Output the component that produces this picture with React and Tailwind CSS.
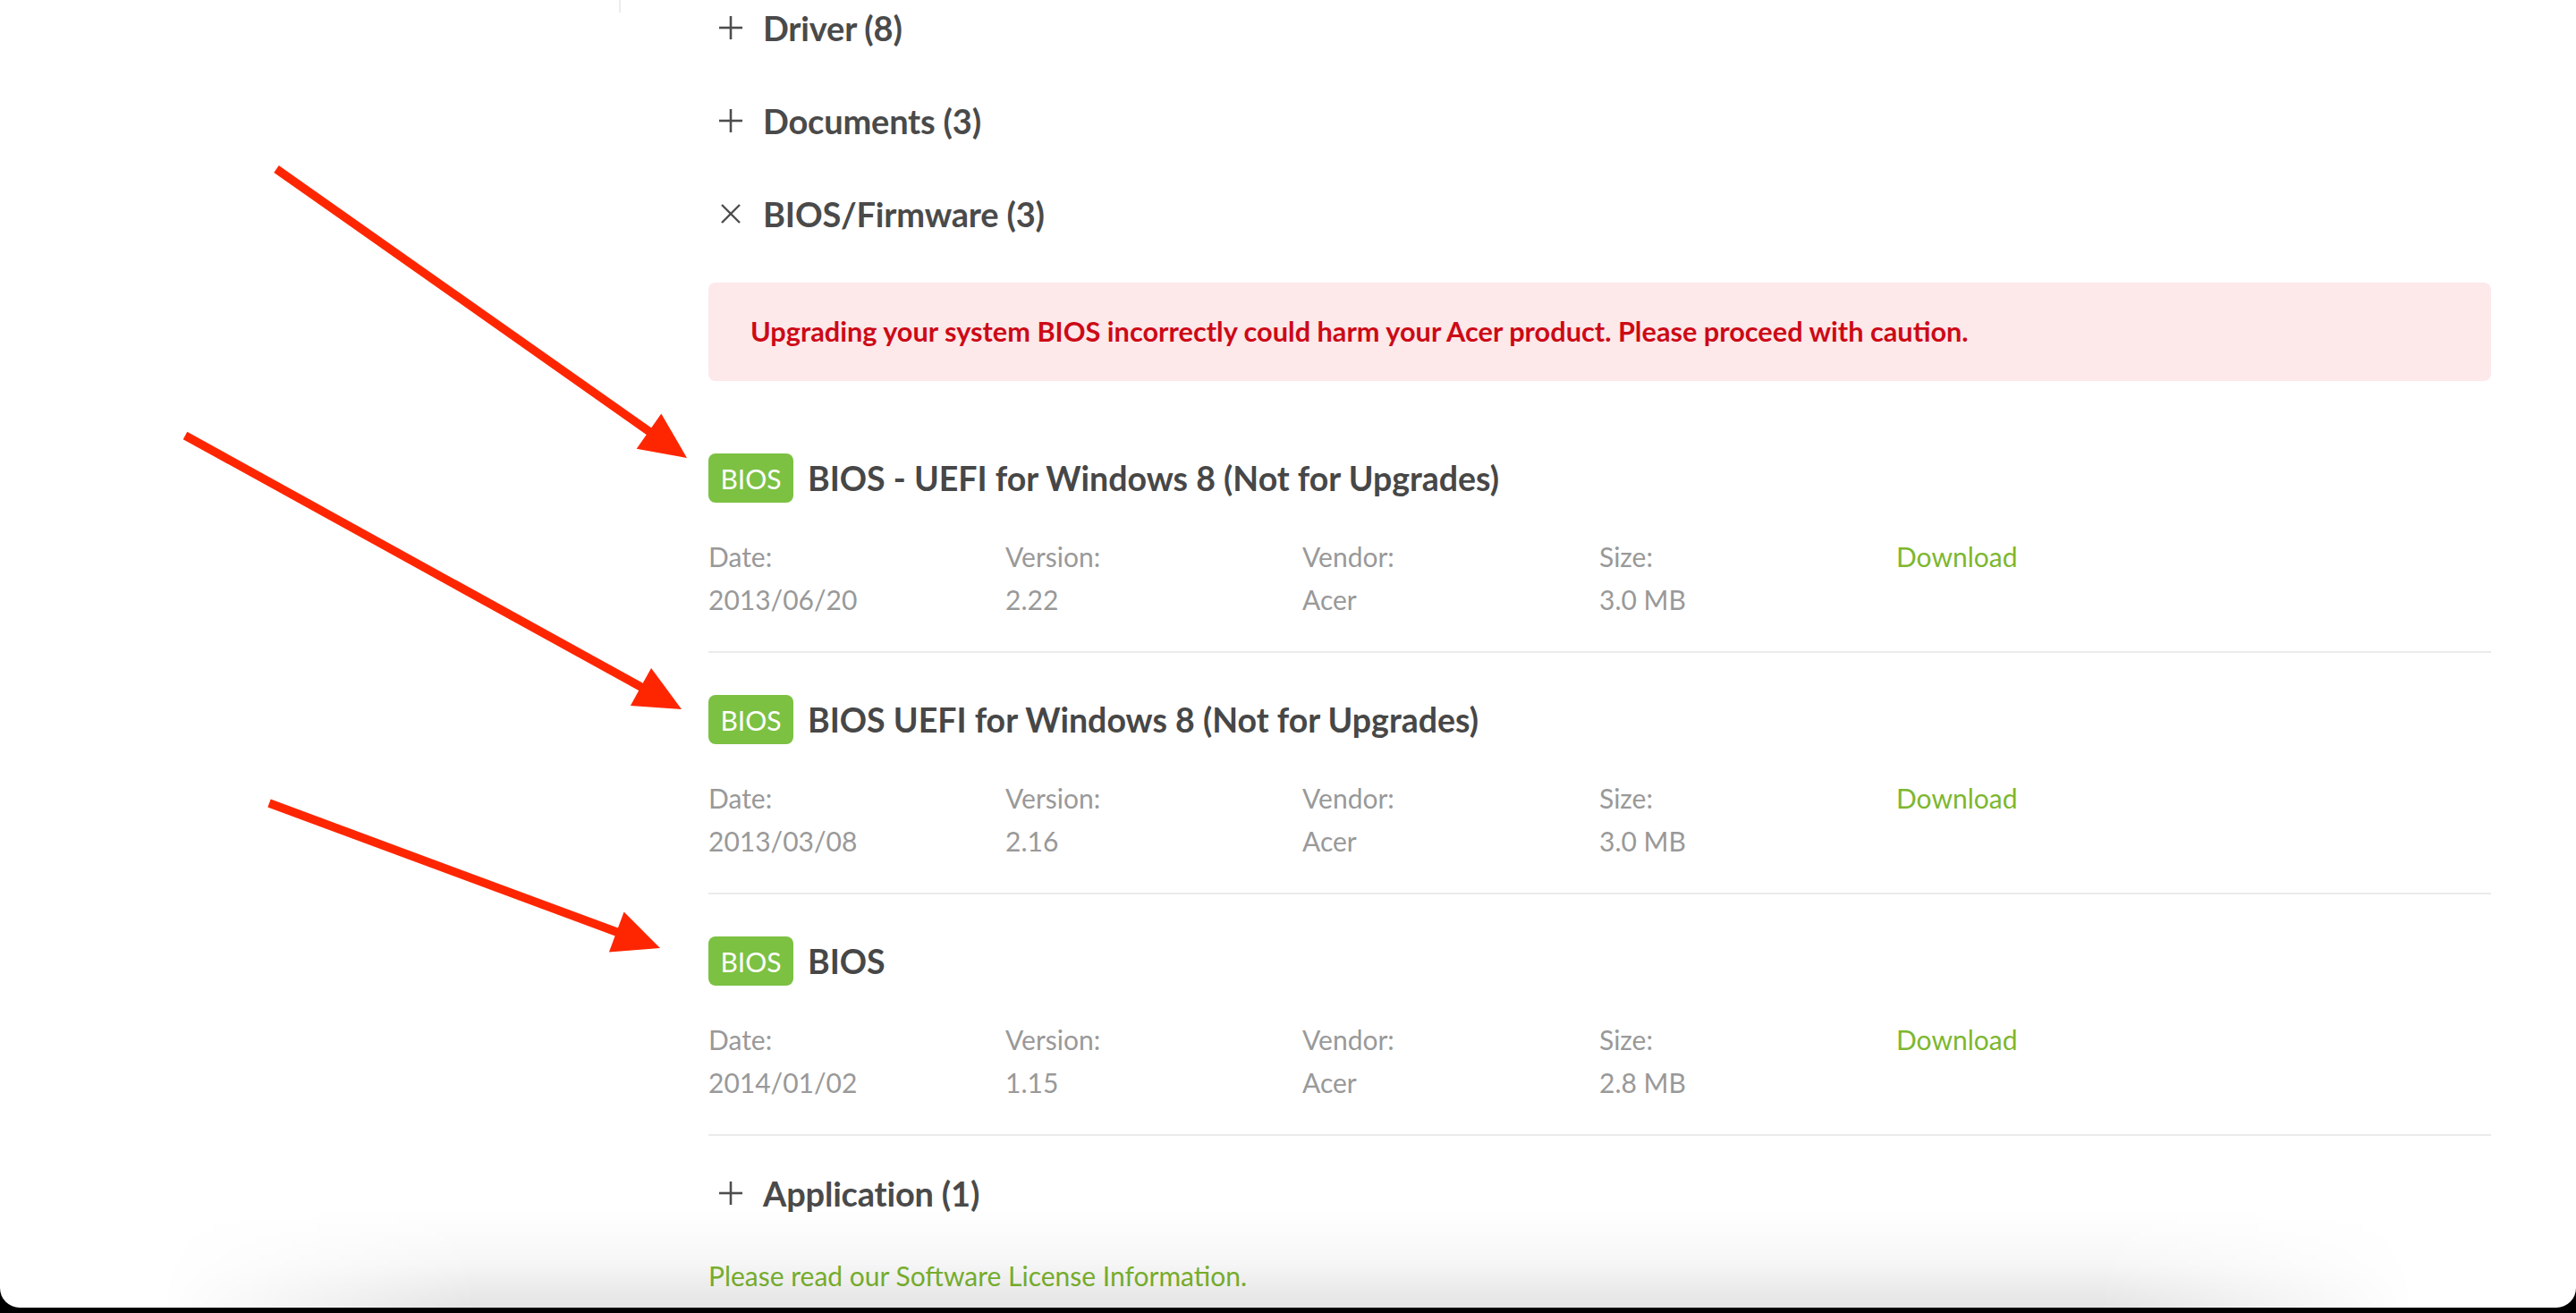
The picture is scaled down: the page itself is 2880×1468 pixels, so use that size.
import React from "react";

function PlusIcon() {
  return (
    <svg width="28" height="28" viewBox="0 0 28 28" className="block">
      <line x1="14" y1="1" x2="14" y2="27" stroke="#4d4d4d" strokeWidth="2.6" />
      <line x1="1" y1="14" x2="27" y2="14" stroke="#4d4d4d" strokeWidth="2.6" />
    </svg>
  );
}

function CloseIcon() {
  return (
    <svg width="28" height="28" viewBox="0 0 28 28" className="block">
      <line x1="4" y1="4" x2="24" y2="24" stroke="#4d4d4d" strokeWidth="2.4" />
      <line x1="24" y1="4" x2="4" y2="24" stroke="#4d4d4d" strokeWidth="2.4" />
    </svg>
  );
}

function Heading({ open, children, className = "" }) {
  return (
    <div className={`flex items-center h-[44px] pl-[11px] gap-[22px] ${className}`}>
      {open ? <CloseIcon /> : <PlusIcon />}
      <span className="text-[38px] leading-[44px] font-bold text-[#4a4a4a] tracking-[-0.2px]">{children}</span>
    </div>
  );
}

function Item({ title, date, version, vendor, size, first }) {
  return (
    <div className={first ? "mt-[81px]" : "mt-[47px]"}>
      <div className="flex items-center gap-[16px] h-[55px]">
        <span className="flex items-center justify-center w-[95px] h-[55px] rounded-[8px] bg-[#7cc142] text-white text-[30px] leading-[36px]">
          BIOS
        </span>
        <span className="text-[37.5px] leading-[44px] font-bold text-[#474747]">{title}</span>
      </div>
      <div className="mt-[42px] grid grid-cols-[332px_332px_332px_332px_1fr] gap-y-[12px] text-[30px] leading-[36px] text-[#999999]">
        <span>Date:</span>
        <span>Version:</span>
        <span>Vendor:</span>
        <span>Size:</span>
        <span className="text-[#7db72f]">Download</span>
        <span>{date}</span>
        <span>{version}</span>
        <span>{vendor}</span>
        <span>{size}</span>
        <span />
      </div>
      <div className="mt-[40px] h-[2px] bg-[#ebebeb]" />
    </div>
  );
}

function Arrow({ x1, y1, x2, y2 }) {
  const dx = x2 - x1;
  const dy = y2 - y1;
  const len = Math.hypot(dx, dy);
  const ux = dx / len;
  const uy = dy / len;
  const L = 52;
  const W = 24;
  const bx = x2 - ux * L;
  const by = y2 - uy * L;
  const px = -uy;
  const py = ux;
  const pts = `${x2},${y2} ${bx + px * W},${by + py * W} ${bx - px * W},${by - py * W}`;
  return (
    <g>
      <line x1={x1} y1={y1} x2={bx + ux * 6} y2={by + uy * 6} stroke="#fe2600" strokeWidth="9.5" />
      <polygon points={pts} fill="#fe2600" />
    </g>
  );
}

export default function App() {
  return (
    <div className="relative w-[2880px] h-[1468px] bg-black overflow-hidden font-['Lato',sans-serif]">
      <div className="relative h-[1462px] bg-white rounded-b-[22px] overflow-hidden">
        <div className="absolute left-[692px] top-0 w-[2px] h-[14px] bg-[#ececec]" />

        <main className="ml-[792px] w-[1993px] pt-[9px]">
          <div className="flex flex-col gap-[60px]">
            <Heading>Driver (8)</Heading>
            <Heading>Documents (3)</Heading>
            <Heading open>BIOS/Firmware (3)</Heading>
          </div>

          <div className="mt-[55px] h-[110px] flex items-center pl-[47px] rounded-[8px] bg-[#fde8ea]">
            <span className="text-[30.7px] leading-[36px] font-bold text-[#cc0a16]">
              Upgrading your system BIOS incorrectly could harm your Acer product. Please proceed with caution.
            </span>
          </div>

          <Item first title="BIOS - UEFI for Windows 8 (Not for Upgrades)" date="2013/06/20" version="2.22" vendor="Acer" size="3.0 MB" />
          <Item title="BIOS UEFI for Windows 8 (Not for Upgrades)" date="2013/03/08" version="2.16" vendor="Acer" size="3.0 MB" />
          <Item title="BIOS" date="2014/01/02" version="1.15" vendor="Acer" size="2.8 MB" />

          <Heading className="mt-[42px]">Application (1)</Heading>

          <p className="mt-[52px] text-[30px] leading-[36px] text-[#7db72f]">Please read our Software License Information.</p>
        </main>

        <div className="absolute bottom-0 left-[180px] right-[180px] h-[110px] bg-[linear-gradient(to_bottom,rgba(0,0,0,0)_0%,rgba(0,0,0,0.035)_55%,rgba(0,0,0,0.11)_100%)] [mask-image:linear-gradient(to_right,transparent_0%,black_14%,black_86%,transparent_100%)] pointer-events-none" />

        <svg className="absolute inset-0 pointer-events-none" width="2880" height="1462" viewBox="0 0 2880 1462">
          <Arrow x1={309} y1={189} x2={768} y2={512} />
          <Arrow x1={207} y1={487} x2={762} y2={793} />
          <Arrow x1={301} y1={898} x2={738} y2={1060} />
        </svg>
      </div>
    </div>
  );
}
